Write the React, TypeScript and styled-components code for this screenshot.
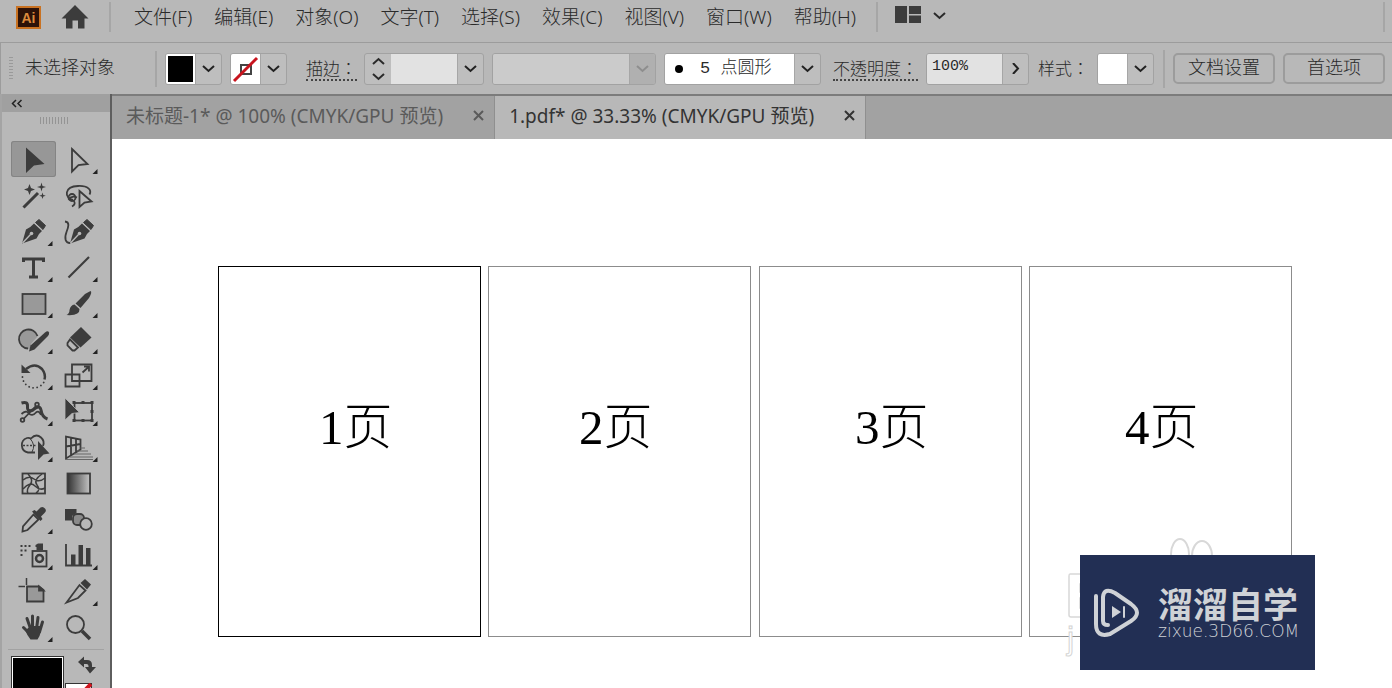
import React from "react";
import styled, { createGlobalStyle, css } from "styled-components";

const INK = "#3c3c3c";
const CHROME = "#b8b8b8";
const UI_FONT = `"Noto Sans", "Noto Sans CJK SC", sans-serif`;
const FIELD_FONT = `"Liberation Mono", "Noto Sans CJK SC", monospace`;
const LABEL_FONT = `"Noto Sans CJK TC", sans-serif`;

const GlobalStyle = createGlobalStyle`
  *, *::before, *::after { box-sizing: border-box; }
  body { margin: 0; background: #fff; font-family: ${UI_FONT}; color: #2a2a2a; }
  button, input, select { font: inherit; color: inherit; margin: 0; }
  button { padding: 0; border: 0; background: none; }
  svg { display: block; flex: none; }
`;

const AppShell = styled.div`
  display: flex;
  flex-direction: column;
  height: 100vh;
  overflow: hidden;
  background: ${CHROME};
`;

/* ---------- menu bar ---------- */

const MenuBar = styled.header`
  display: flex;
  align-items: center;
  height: 43px;
  padding: 0 7px 8px 16px;
  border-bottom: 1px solid #9c9c9c;
  flex: none;
`;

const HomeButton = styled.button`
  margin: 0 20px;
`;

const BarDivider = styled.span<{ $height?: number }>`
  flex: none;
  width: 2px;
  height: ${(p) => p.$height ?? 30}px;
  background: #a6a6a6;
`;

const MenuList = styled.nav`
  display: flex;
  gap: 22px;
  margin: 0 20px 0 23px;
`;

const MenuButton = styled.button`
  font-size: 19px;
  line-height: 26px;
  font-weight: 300;
  white-space: nowrap;
`;

const WorkspaceButton = styled.button`
  display: flex;
  align-items: center;
  gap: 12px;
  margin: 0 auto 4px 17px;
`;

/* ---------- control bar ---------- */

const ControlBar = styled.section`
  display: flex;
  align-items: center;
  height: 51px;
  padding: 0 7px 0 8px;
  border-left: 1px solid #9c9c9c;
  flex: none;
  font-family: ${FIELD_FONT};
  font-size: 18px;
  line-height: 22px;
  font-weight: 300;
  white-space: nowrap;
`;

const VerticalGrip = styled.span`
  width: 4px;
  height: 24px;
  background: repeating-linear-gradient(#9a9a9a 0 1px, transparent 1px 3px);
`;

const SelectionState = styled.span`
  margin: 0 40px 0 12px;
`;

const FieldLabel = styled.label<{ $space: number; $link?: boolean }>`
  margin-left: ${(p) => p.$space}px;
  border-bottom: 2px ${(p) => (p.$link ? "dotted #444" : "solid transparent")};
  font-family: ${LABEL_FONT};
  font-size: 17px;
`;

const Combo = styled.div<{ $gap?: number }>`
  display: flex;
  height: 32px;
  margin-left: ${(p) => p.$gap ?? 8}px;
  border: 1px solid #a2a2a2;
  border-radius: 3px;
  background: #bebebe;
  overflow: hidden;
  flex: none;
`;

const SwatchButton = styled.button`
  width: 29px;
  height: 30px;
  background: #fff;
`;

const ArrowButton = styled.button<{ $muted?: boolean }>`
  display: grid;
  place-items: center;
  width: 26px;
  height: 30px;
  border-left: 1px solid #a6a6a6;
  color: ${(p) => (p.$muted ? "#8e8e8e" : "#222")};
  background: ${(p) => (p.$muted ? "#b0b0b0" : "transparent")};
`;

const Stepper = styled.div`
  display: grid;
  width: 26px;
  height: 30px;
`;

const StepButton = styled.button`
  display: grid;
  place-items: center;
`;

const fieldBase = css`
  height: 30px;
  border: 0;
  border-radius: 0;
  outline: 0;
  appearance: none;
`;

const NumberField = styled.input<{ $width: number }>`
  ${fieldBase}
  width: ${(p) => p.$width}px;
  padding: 0 5px 4px;
  background: #e2e2e2;
  font-size: 15px;
`;

const FieldSelect = styled.select<{ $width: number; $tone: string }>`
  ${fieldBase}
  width: ${(p) => p.$width}px;
  padding: 0 0 0 35px;
  background: ${(p) => p.$tone};
  font-size: 17px;
  opacity: 1;
`;

const BrushField = styled.div`
  display: grid;
  align-items: center;
  background: #fff;
  > * { grid-area: 1 / 1; }
`;

const BrushDot = styled.span`
  width: 8px;
  height: 8px;
  margin-left: 10px;
  border-radius: 50%;
  background: #000;
  pointer-events: none;
`;

const CommandGroup = styled.div`
  display: flex;
  flex: 1;
  align-items: center;
  gap: 8px;
  margin-left: 9px;
`;

const CommandButton = styled.button`
  flex: 0 1 102px;
  height: 31px;
  border: 2px solid #9c9c9c;
  border-radius: 5px;
`;

/* ---------- workspace ---------- */

const Workspace = styled.div`
  display: flex;
  flex: 1;
  min-height: 0;
`;

const ToolPanel = styled.aside`
  display: flex;
  flex-direction: column;
  flex: none;
  width: 112px;
  border-left: 2px solid #a4a4a4;
  border-right: 2px solid #5e5e5e;
  background: ${CHROME};
`;

const CollapseBar = styled.button`
  display: flex;
  align-items: center;
  flex: none;
  height: 18px;
  padding-left: 9px;
  background: #a0a0a0;
`;

const PanelGrip = styled.span`
  flex: none;
  width: 29px;
  height: 7px;
  margin: 5px 0 17px 38px;
  background: repeating-linear-gradient(90deg, #949494 0 1px, transparent 1px 3px);
`;

const ToolGrid = styled.div`
  display: grid;
  flex: none;
  grid-template-columns: 45px 45px;
  grid-auto-rows: 36px;
  margin-left: 9px;
`;

const ToolButton = styled.button<{ $active?: boolean }>`
  border-radius: 3px;
  color: ${INK};
  ${(p) =>
    p.$active &&
    css`
      background: #979797;
      box-shadow: inset 0 0 0 1px #848484;
    `}
`;

const ColorArea = styled.div`
  display: flex;
  flex: none;
  gap: 1px;
  margin: 4px 6px 0;
  padding: 6px 0 0 3px;
  border-top: 1px solid #a2a2a2;
`;

const FillSwatch = styled.button`
  width: 53px;
  height: 53px;
  border: 1px solid #333;
  background: #000;
  box-shadow: inset 0 0 0 1px #fff;
`;

const SwapColumn = styled.div`
  display: flex;
  flex-direction: column;
  gap: 9px;
`;

const SwapButton = styled.button`
  margin-left: 13px;
`;

/* ---------- document ---------- */

const DocumentArea = styled.main`
  display: flex;
  flex-direction: column;
  flex: 1;
  min-width: 0;
`;

const TabStrip = styled.div`
  display: flex;
  flex: none;
  height: 45px;
  border-top: 2px solid #7c7c7c;
  background: #a2a2a2;
`;

const Tab = styled.div<{ $active?: boolean }>`
  display: flex;
  align-items: center;
  gap: 30px;
  padding: 0 10px 4px 14px;
  border-right: 1px solid #8f8f8f;
  background: ${(p) => (p.$active ? CHROME : "transparent")};
  color: ${(p) => (p.$active ? "#333" : "#5a5a5a")};
`;

const TabTitle = styled.button`
  font-size: 19px;
  line-height: 28px;
  font-weight: 400;
  white-space: nowrap;
`;

const Canvas = styled.div`
  position: relative;
  flex: 1;
  overflow: hidden;
  background: #fff;
`;

const Artboard = styled.article<{ $left: number; $inset: number; $active?: boolean }>`
  position: absolute;
  top: 127px;
  left: ${(p) => p.$left}px;
  width: 263px;
  height: 371px;
  padding: 127px 0 0 ${(p) => p.$inset}px;
  border: 1px solid ${(p) => (p.$active ? "#000" : "#8c8c8c")};
  color: #000;
  font-family: "Liberation Serif", "Noto Sans CJK SC", serif;
  font-size: 49px;
  line-height: 68px;
  font-weight: 300;
`;

const GhostMark = styled.div`
  position: absolute;
  top: 399px;
  left: 952px;
`;

const GhostEars = styled.div`
  position: absolute;
  top: 399px;
  left: 1056px;
`;

const GhostLetter = styled.span`
  position: absolute;
  top: 82px;
  left: 3px;
  font-family: "Liberation Sans", sans-serif;
  font-size: 32px;
  line-height: 36px;
  color: #fff;
  -webkit-text-stroke: 1px #d4d4d4;
`;

const Badge = styled.div`
  position: absolute;
  top: 416px;
  left: 968px;
  display: flex;
  align-items: center;
  gap: 17px;
  width: 235px;
  height: 115px;
  padding-left: 13px;
  background: #222f54;
  color: #cfd2d6;
`;

const BadgeText = styled.div`
  display: flex;
  flex-direction: column;
  gap: 6px;
  white-space: nowrap;
`;

const BadgeName = styled.span`
  font-family: "Noto Sans CJK SC", sans-serif;
  font-size: 35px;
  line-height: 30px;
  font-weight: 700;
`;

const BadgeSite = styled.span`
  font-family: "DejaVu Sans", sans-serif;
  font-size: 17px;
  line-height: 14px;
  font-weight: 200;
`;

/* ---------- small drawings ---------- */

const chevrons = {
  down: "M1 3 6.500 8 12 3",
  up: "M1 8 6.500 3 12 8",
  right: "M4 0 9 5.500 4 11",
};

function Chevron({ to = "down" }: { to?: keyof typeof chevrons }) {
  return (
    <svg width="13" height="11" viewBox="0 0 13 11" fill="none" stroke="currentColor" strokeWidth="2">
      <path d={chevrons[to]} />
    </svg>
  );
}

function CloseIcon() {
  return (
    <svg width="11" height="11" viewBox="0 0 11 11" stroke="currentColor" strokeWidth="2">
      <path d="M1 1 10 10M10 1 1 10" />
    </svg>
  );
}

function AppLogo() {
  return (
    <svg width="25" height="23" viewBox="0 0 25 23" role="img" aria-label="Ai">
      <rect x="1" y="1" width="23" height="21" fill="#2d1208" stroke="#c97222" strokeWidth="2" />
      <text x="12.500" y="16.500" textAnchor="middle" fill="#dc8a3c" fontFamily="Liberation Sans, sans-serif" fontWeight="700" fontSize="14">
        Ai
      </text>
    </svg>
  );
}

function HomeIcon() {
  return (
    <svg width="28" height="24" viewBox="0 0 28 24" fill={INK}>
      <path d="M14 0 27.500 13.500H23.500V23.500H17V15.500H11.500V23.500H5V13.500H0.500Z" />
    </svg>
  );
}

function WorkspaceIcon() {
  return (
    <svg width="26" height="18" viewBox="0 0 26 18" fill={INK}>
      <path d="M0 0H12V17H0ZM14 0H26V8H14ZM14 9.500H26V17H14Z" />
    </svg>
  );
}

const penShape = (
  <>
    <path d="M11 30.500 15 16.500Q19 15 23 10.500L31 18Q27 21 25.500 25.500Z" fill="currentColor" stroke="none" />
    <path d="M11.500 30 19.500 21.500" stroke={CHROME} strokeWidth="1.400" />
    <circle cx="20.500" cy="20.500" r="1.800" fill={CHROME} stroke="none" />
    <path d="M24.500 9.500 28 6.500 34.500 12.500 32 16.500Z" fill="currentColor" stroke="currentColor" strokeWidth="1" strokeLinejoin="round" />
  </>
);

type Tool = { name: string; art: React.ReactNode; flyout?: boolean; active?: boolean };

const tools: Tool[] = [
  { name: "选择工具", active: true, art: <path d="M15 6.500 33.500 23 23 24.500 15 32Z" fill="currentColor" stroke="none" /> },
  { name: "直接选择工具", flyout: true, art: <path d="M16 8 31.500 23 22.500 24 16 30.500Z" /> },
  {
    name: "魔棒工具",
    art: (
      <>
        <path d="M12.500 30.500 27 16" strokeWidth="3" />
        <path
          d="M18.500 7 20 11 24 12.500 20 14 18.500 18 17 14 13 12.500 17 11ZM30.500 5.500 31.500 9 35 10 31.500 11 30.500 14.500 29.500 11 26 10 29.500 9ZM31.500 15.500 32.300 18 34.800 18.800 32.300 19.600 31.500 22 30.700 19.600 28.200 18.800 30.700 18Z"
          fill="currentColor"
          stroke="none"
        />
      </>
    ),
  },
  {
    name: "套索工具",
    art: (
      <>
        <path d="M17 23C8 21 8 9.500 22 9 32 8.500 36 13 33.500 17.500" />
        <circle cx="16" cy="20.500" r="3.500" />
        <path d="M12.500 22.500Q16 18 21 20.500M17.500 23.500Q20.500 27 16 29.500" />
        <path d="M23.500 14 35.500 24.500 28.500 25.500 23.500 30Z" />
      </>
    ),
  },
  { name: "钢笔工具", flyout: true, art: penShape },
  {
    name: "曲率工具",
    art: (
      <>
        <g transform="translate(3 0)">{penShape}</g>
        <path d="M9 8.500C14 9 12.500 14 10.500 19 8 25.500 9.500 30 14 30" />
      </>
    ),
  },
  {
    name: "文字工具",
    flyout: true,
    art: <path d="M12.500 13V10H32.500V13M22.500 10V28M18 28H27" strokeWidth="3" />,
  },
  { name: "直线段工具", flyout: true, art: <path d="M12.500 28.500 33 8" strokeWidth="2.200" /> },
  { name: "矩形工具", flyout: true, art: <rect x="11.500" y="9" width="23" height="20" fill="#999" /> },
  {
    name: "画笔工具",
    flyout: true,
    art: <path d="M34.500 6Q36.500 7 33 13L24.500 23 19.500 18.500 29 9ZM18.500 19.500 23.500 24Q24 31 10.500 30 13.500 28.500 13.500 25 14.500 20 18.500 19.500Z" fill="currentColor" stroke="none" />,
  },
  {
    name: "Shaper 工具",
    flyout: true,
    art: (
      <>
        <path d="M20 27.500A9.500 9.500 0 1 1 26.500 15.500L20 23Z" fill="#999" stroke="none" />
        <path d="M17 27.500A9.500 9.500 0 1 1 26.500 15" />
        <path d="M18 30.500 19.500 24.500 34 11.500Q37 9 38 11.500 38.500 13 37 15L23.500 28.500Z" fill="currentColor" stroke="none" />
      </>
    ),
  },
  {
    name: "橡皮擦工具",
    flyout: true,
    art: (
      <>
        <path d="M25 6 35.500 16.500 24.500 26.500 14 16.500Z" fill="currentColor" stroke="none" />
        <path d="M14 18.500 22 26.500 18.500 29.500H16.500L11.500 24.500V22Z" />
      </>
    ),
  },
  {
    name: "旋转工具",
    flyout: true,
    art: (
      <>
        <path d="M15 12Q24 5 31 12 35 17 33.500 22.500" strokeWidth="2.500" />
        <path d="M10.500 7.500V16H19.500Z" fill="currentColor" stroke="none" />
        <path d="M11.500 20A11.500 11.500 0 0 0 33 25" strokeDasharray="0.100 4" strokeLinecap="round" />
      </>
    ),
  },
  {
    name: "比例缩放工具",
    flyout: true,
    art: (
      <>
        <path d="M16 7.500H35.500V24H16ZM9.500 17.500H23.500V29.500H9.500Z" />
        <path d="M26.500 15.500 32 10.500M28 9.500H33V14.500" />
      </>
    ),
  },
  {
    name: "变形工具",
    flyout: true,
    art: (
      <>
        <path d="M10.500 10Q17 8 16.500 13.500 16 19.500 22 17 28.500 11 30 17 31 24 36.500 26" strokeWidth="3" />
        <path d="M10.500 21Q15 17 17.500 20 21 24 25 19.500 28 17 30 22M12.500 26 25 13" />
        <circle cx="11.500" cy="27" r="1.800" />
        <circle cx="26" cy="11.500" r="1.800" />
      </>
    ),
  },
  {
    name: "自由变换工具",
    flyout: true,
    art: (
      <>
        <rect x="18.500" y="10" width="17.500" height="17.500" />
        <path d="M16.500 8h3v3h-3zM25.500 8h3v3h-3zM34.500 8h3v3h-3zM34.500 17h3v3h-3zM34.500 26h3v3h-3zM25.500 26h3v3h-3zM16.500 26h3v3h-3z" fill="currentColor" stroke="none" />
        <path d="M9 5 23.500 19.500 16 20.500 9 27Z" fill="currentColor" stroke={CHROME} strokeWidth="0.800" />
      </>
    ),
  },
  {
    name: "形状生成器工具",
    flyout: true,
    art: (
      <>
        <path d="M24 23.500H17A7.500 7.500 0 0 1 16 9Q18 8.500 20 9.500 25 4 30 8.500 34 12 32 17" />
        <path d="M19 9.500Q25 16 21 23" strokeWidth="1" />
        <path d="M12 16.500H26" strokeDasharray="2 1.500" strokeWidth="1.500" />
        <path d="M27 12 38.500 24.500 32.500 25.500 27 31Z" fill="currentColor" stroke="none" />
      </>
    ),
  },
  {
    name: "透视网格工具",
    flyout: true,
    art: (
      <>
        <path d="M10 7.500V29.500L24.500 20.500V10.500ZM15 8.500V26.500M20 9.500V23.500M10 17.500 24.500 15" />
        <path d="M24.500 19H29M21 22H32M18 25H35M14 28H37M10 30.500H37" strokeWidth="1" stroke="#666" />
      </>
    ),
  },
  {
    name: "网格工具",
    art: (
      <>
        <rect x="11.500" y="8.500" width="22.500" height="20" />
        <path d="M12 15Q18 10 23 14T34 13M12 24Q19 16 24 21T34 23M17 9Q23 15 19 20T17 28M31 9Q22 15 26 20T25 28" strokeWidth="1.500" />
      </>
    ),
  },
  {
    name: "渐变工具",
    art: (
      <>
        <defs>
          <linearGradient id="tool-gradient">
            <stop offset="0" stopColor="#333" />
            <stop offset="1" stopColor="#c4c4c4" />
          </linearGradient>
        </defs>
        <rect x="11.500" y="8.500" width="22.500" height="20" fill="url(#tool-gradient)" />
      </>
    ),
  },
  {
    name: "吸管工具",
    flyout: true,
    art: (
      <>
        <path d="M22.500 13.500 27.500 18.500 16.500 29 11.500 30.500 12 25.500Z" />
        <path d="M21 10.500 23.500 9 25.500 10.500 29.500 6.500Q32 5 34 7.500 36 10 33.500 12L30 15.500 31.500 18 29.500 20Z" fill="currentColor" stroke="none" />
      </>
    ),
  },
  {
    name: "混合工具",
    art: (
      <>
        <path d="M9 8H20.500V12L16 15V19.500H9Z" fill="currentColor" stroke="none" />
        <rect x="17" y="13" width="11" height="11" rx="4" fill="#8a8a8a" />
        <circle cx="30" cy="23" r="5.800" fill={CHROME} />
      </>
    ),
  },
  {
    name: "符号喷枪工具",
    flyout: true,
    art: (
      <>
        <path d="M9.500 8h2v2h-2zM13.500 8h2v2h-2zM17.500 8h2v2h-2zM9.500 12.500h2v2h-2zM13.500 12.500h2v2h-2zM9.500 17h2v2h-2z" fill="currentColor" stroke="none" />
        <rect x="21.500" y="14" width="14" height="15.500" />
        <circle cx="28.500" cy="21.500" r="3.500" strokeWidth="2.500" />
        <path d="M24.500 8 27 6.500H32V13H25.500V10H24.500Z" fill="currentColor" stroke="none" />
      </>
    ),
  },
  {
    name: "柱形图工具",
    flyout: true,
    art: (
      <>
        <path d="M10 7V28.500H36" />
        <path d="M15 17.500h4.500V28H15zM22.500 8H27v20h-4.500zM30 11h4.500v17H30z" fill="currentColor" stroke="none" />
      </>
    ),
  },
  {
    name: "画板工具",
    art: (
      <>
        <path d="M16 13.500H28L32.500 17V28.500H16Z" fill="#999" />
        <path d="M28 13.500V17.500H32.500Z" fill="currentColor" />
        <path d="M7.500 13.500H14M15.500 5V12" strokeWidth="1.500" />
      </>
    ),
  },
  {
    name: "切片工具",
    flyout: true,
    art: (
      <>
        <path d="M10.500 29.500 23.500 12 29.500 17.500 22 25Z" />
        <path d="M24.500 10 29 6 35 11.500 31 16.500Z" fill="currentColor" stroke="none" />
      </>
    ),
  },
  {
    name: "抓手工具",
    flyout: true,
    art: (
      <>
        <path d="M12.500 18.500 19 25M16 9.500 20 21M21.500 7V20M27 8.500 25.500 20M31.500 13 28.500 23" strokeWidth="3" strokeLinecap="round" />
        <path d="M16 20 19.500 17H29.500L30 22Q29 27 26.500 30.500H19.500Q16 26 14 21Z" fill="currentColor" stroke="none" />
      </>
    ),
  },
  {
    name: "缩放工具",
    art: (
      <>
        <circle cx="19.500" cy="15.500" r="8.500" />
        <path d="M26 22 34 30" strokeWidth="3.500" />
      </>
    ),
  },
];

const menus = ["文件(F)", "编辑(E)", "对象(O)", "文字(T)", "选择(S)", "效果(C)", "视图(V)", "窗口(W)", "帮助(H)"];

const tabs = [
  { title: "未标题-1* @ 100% (CMYK/GPU 预览)", active: false },
  { title: "1.pdf* @ 33.33% (CMYK/GPU 预览)", active: true },
];

const artboards = [
  { label: "1页", left: 106, inset: 100, active: true },
  { label: "2页", left: 376, inset: 90 },
  { label: "3页", left: 647, inset: 95 },
  { label: "4页", left: 917, inset: 95 },
];

export default function App() {
  return (
    <AppShell>
      <GlobalStyle />
      <MenuBar>
        <AppLogo />
        <HomeButton aria-label="主页">
          <HomeIcon />
        </HomeButton>
        <BarDivider />
        <MenuList>
          {menus.map((m) => (
            <MenuButton key={m}>{m}</MenuButton>
          ))}
        </MenuList>
        <BarDivider />
        <WorkspaceButton aria-label="切换工作区">
          <WorkspaceIcon />
          <Chevron />
        </WorkspaceButton>
        <BarDivider />
      </MenuBar>

      <ControlBar>
        <VerticalGrip />
        <SelectionState>未选择对象</SelectionState>
        <BarDivider $height={36} />
        <Combo>
          <SwatchButton aria-label="填色">
            <svg width="29" height="30" viewBox="0 0 29 30">
              <rect x="2" y="2" width="25" height="26" fill="#000" />
            </svg>
          </SwatchButton>
          <ArrowButton aria-label="填色选项">
            <Chevron />
          </ArrowButton>
        </Combo>
        <Combo>
          <SwatchButton aria-label="描边颜色">
            <svg width="29" height="30" viewBox="0 0 29 30" fill="none">
              <rect x="10" y="11" width="10" height="9" stroke="#444" strokeWidth="2" />
              <path d="M3 27 26 4" stroke="#c8141e" strokeWidth="3" />
            </svg>
          </SwatchButton>
          <ArrowButton aria-label="描边颜色选项">
            <Chevron />
          </ArrowButton>
        </Combo>
        <FieldLabel htmlFor="stroke-weight" $space={19} $link>
          描边：
        </FieldLabel>
        <Combo $gap={7}>
          <Stepper>
            <StepButton aria-label="增大">
              <Chevron to="up" />
            </StepButton>
            <StepButton aria-label="减小">
              <Chevron />
            </StepButton>
          </Stepper>
          <NumberField id="stroke-weight" $width={66} />
          <ArrowButton aria-label="描边粗细选项">
            <Chevron />
          </ArrowButton>
        </Combo>
        <Combo>
          <FieldSelect $width={136} $tone="#cbcbcb" aria-label="变量宽度配置文件" disabled />
          <ArrowButton $muted disabled aria-label="配置文件选项">
            <Chevron />
          </ArrowButton>
        </Combo>
        <Combo>
          <BrushField>
            <FieldSelect $width={129} $tone="#fff" aria-label="画笔定义" defaultValue="5">
              <option value="5">5 点圆形</option>
            </FieldSelect>
            <BrushDot />
          </BrushField>
          <ArrowButton aria-label="画笔选项">
            <Chevron />
          </ArrowButton>
        </Combo>
        <FieldLabel htmlFor="opacity" $space={12} $link>
          不透明度：
        </FieldLabel>
        <Combo $gap={8}>
          <NumberField id="opacity" $width={75} defaultValue="100%" />
          <ArrowButton aria-label="不透明度选项">
            <Chevron to="right" />
          </ArrowButton>
        </Combo>
        <FieldLabel htmlFor="graphic-style" $space={9}>
          样式：
        </FieldLabel>
        <Combo $gap={8}>
          <SwatchButton id="graphic-style" />
          <ArrowButton aria-label="样式选项">
            <Chevron />
          </ArrowButton>
        </Combo>
        <CommandGroup>
          <BarDivider $height={38} />
          <CommandButton>文档设置</CommandButton>
          <CommandButton>首选项</CommandButton>
        </CommandGroup>
      </ControlBar>

      <Workspace>
        <ToolPanel>
          <CollapseBar aria-label="折叠面板">
            <svg width="12" height="9" viewBox="0 0 12 9" fill="none" stroke="#222" strokeWidth="1.500">
              <path d="M5 1 1.500 4.500 5 8M10.500 1 7 4.500 10.500 8" />
            </svg>
          </CollapseBar>
          <PanelGrip />
          <ToolGrid>
            {tools.map((t) => (
              <ToolButton key={t.name} aria-label={t.name} $active={t.active}>
                <svg width="45" height="36" viewBox="0 0 45 36" fill="none" stroke="currentColor" strokeWidth="1.800">
                  {t.art}
                  {t.flyout && <path d="M41.500 28V33H36.500Z" fill="#222" stroke="none" />}
                </svg>
              </ToolButton>
            ))}
          </ToolGrid>
          <ColorArea>
            <FillSwatch aria-label="填色" />
            <SwapColumn>
              <SwapButton aria-label="互换填色和描边">
                <svg width="18" height="18" viewBox="0 0 18 18" fill={INK}>
                  <path d="M0 6 6 0.500V4H9Q14 4 14 9V11H18L12 17.500 7 11H10.500V10Q10.500 8 8.500 8H6V11.500Z" />
                </svg>
              </SwapButton>
              <button aria-label="描边">
                <svg width="27" height="27" viewBox="0 0 27 27">
                  <rect x="0.500" y="0.500" width="26" height="26" fill="#fff" stroke="#333" />
                  <path d="M2 26 26 1" stroke="#d0141e" strokeWidth="4" />
                </svg>
              </button>
            </SwapColumn>
          </ColorArea>
        </ToolPanel>

        <DocumentArea>
          <TabStrip>
            {tabs.map((t) => (
              <Tab key={t.title} $active={t.active}>
                <TabTitle>{t.title}</TabTitle>
                <button aria-label="关闭">
                  <CloseIcon />
                </button>
              </Tab>
            ))}
          </TabStrip>
          <Canvas>
            {artboards.map((a) => (
              <Artboard key={a.label} $left={a.left} $inset={a.inset} $active={a.active}>
                {a.label}
              </Artboard>
            ))}
            <GhostMark>
              <svg width="70" height="84" viewBox="0 0 70 84" fill="#fff" stroke="#d8d8d8" strokeWidth="1.500">
                <path d="M20 36H6Q5 36 5 38V77Q5 79 7 79H20M20 46H16V54H20M20 60H16V70H20" />
              </svg>
              <GhostLetter>j</GhostLetter>
            </GhostMark>
            <GhostEars>
              <svg width="46" height="36" viewBox="0 0 46 36" fill="#fff" stroke="#d8d8d8" strokeWidth="2">
                <ellipse cx="12" cy="16" rx="9" ry="15" />
                <ellipse cx="34" cy="18" rx="10" ry="15" />
              </svg>
            </GhostEars>
            <Badge>
              <svg width="48" height="50" viewBox="0 0 48 50" fill="none" stroke="#cfd2d6" strokeWidth="4" strokeLinecap="round">
                <path d="M3 8V36Q3 50 17 46L38 33Q50 25 38 16L22 5Q11 -1 10 9V33Q10 37 15 37" strokeLinejoin="round" />
                <path d="M19 18 28 24 19 30Z" fill="#cfd2d6" stroke="none" />
                <path d="M31 19V29" strokeWidth="2" />
              </svg>
              <BadgeText>
                <BadgeName>溜溜自学</BadgeName>
                <BadgeSite>zixue.3D66.COM</BadgeSite>
              </BadgeText>
            </Badge>
          </Canvas>
        </DocumentArea>
      </Workspace>
    </AppShell>
  );
}
